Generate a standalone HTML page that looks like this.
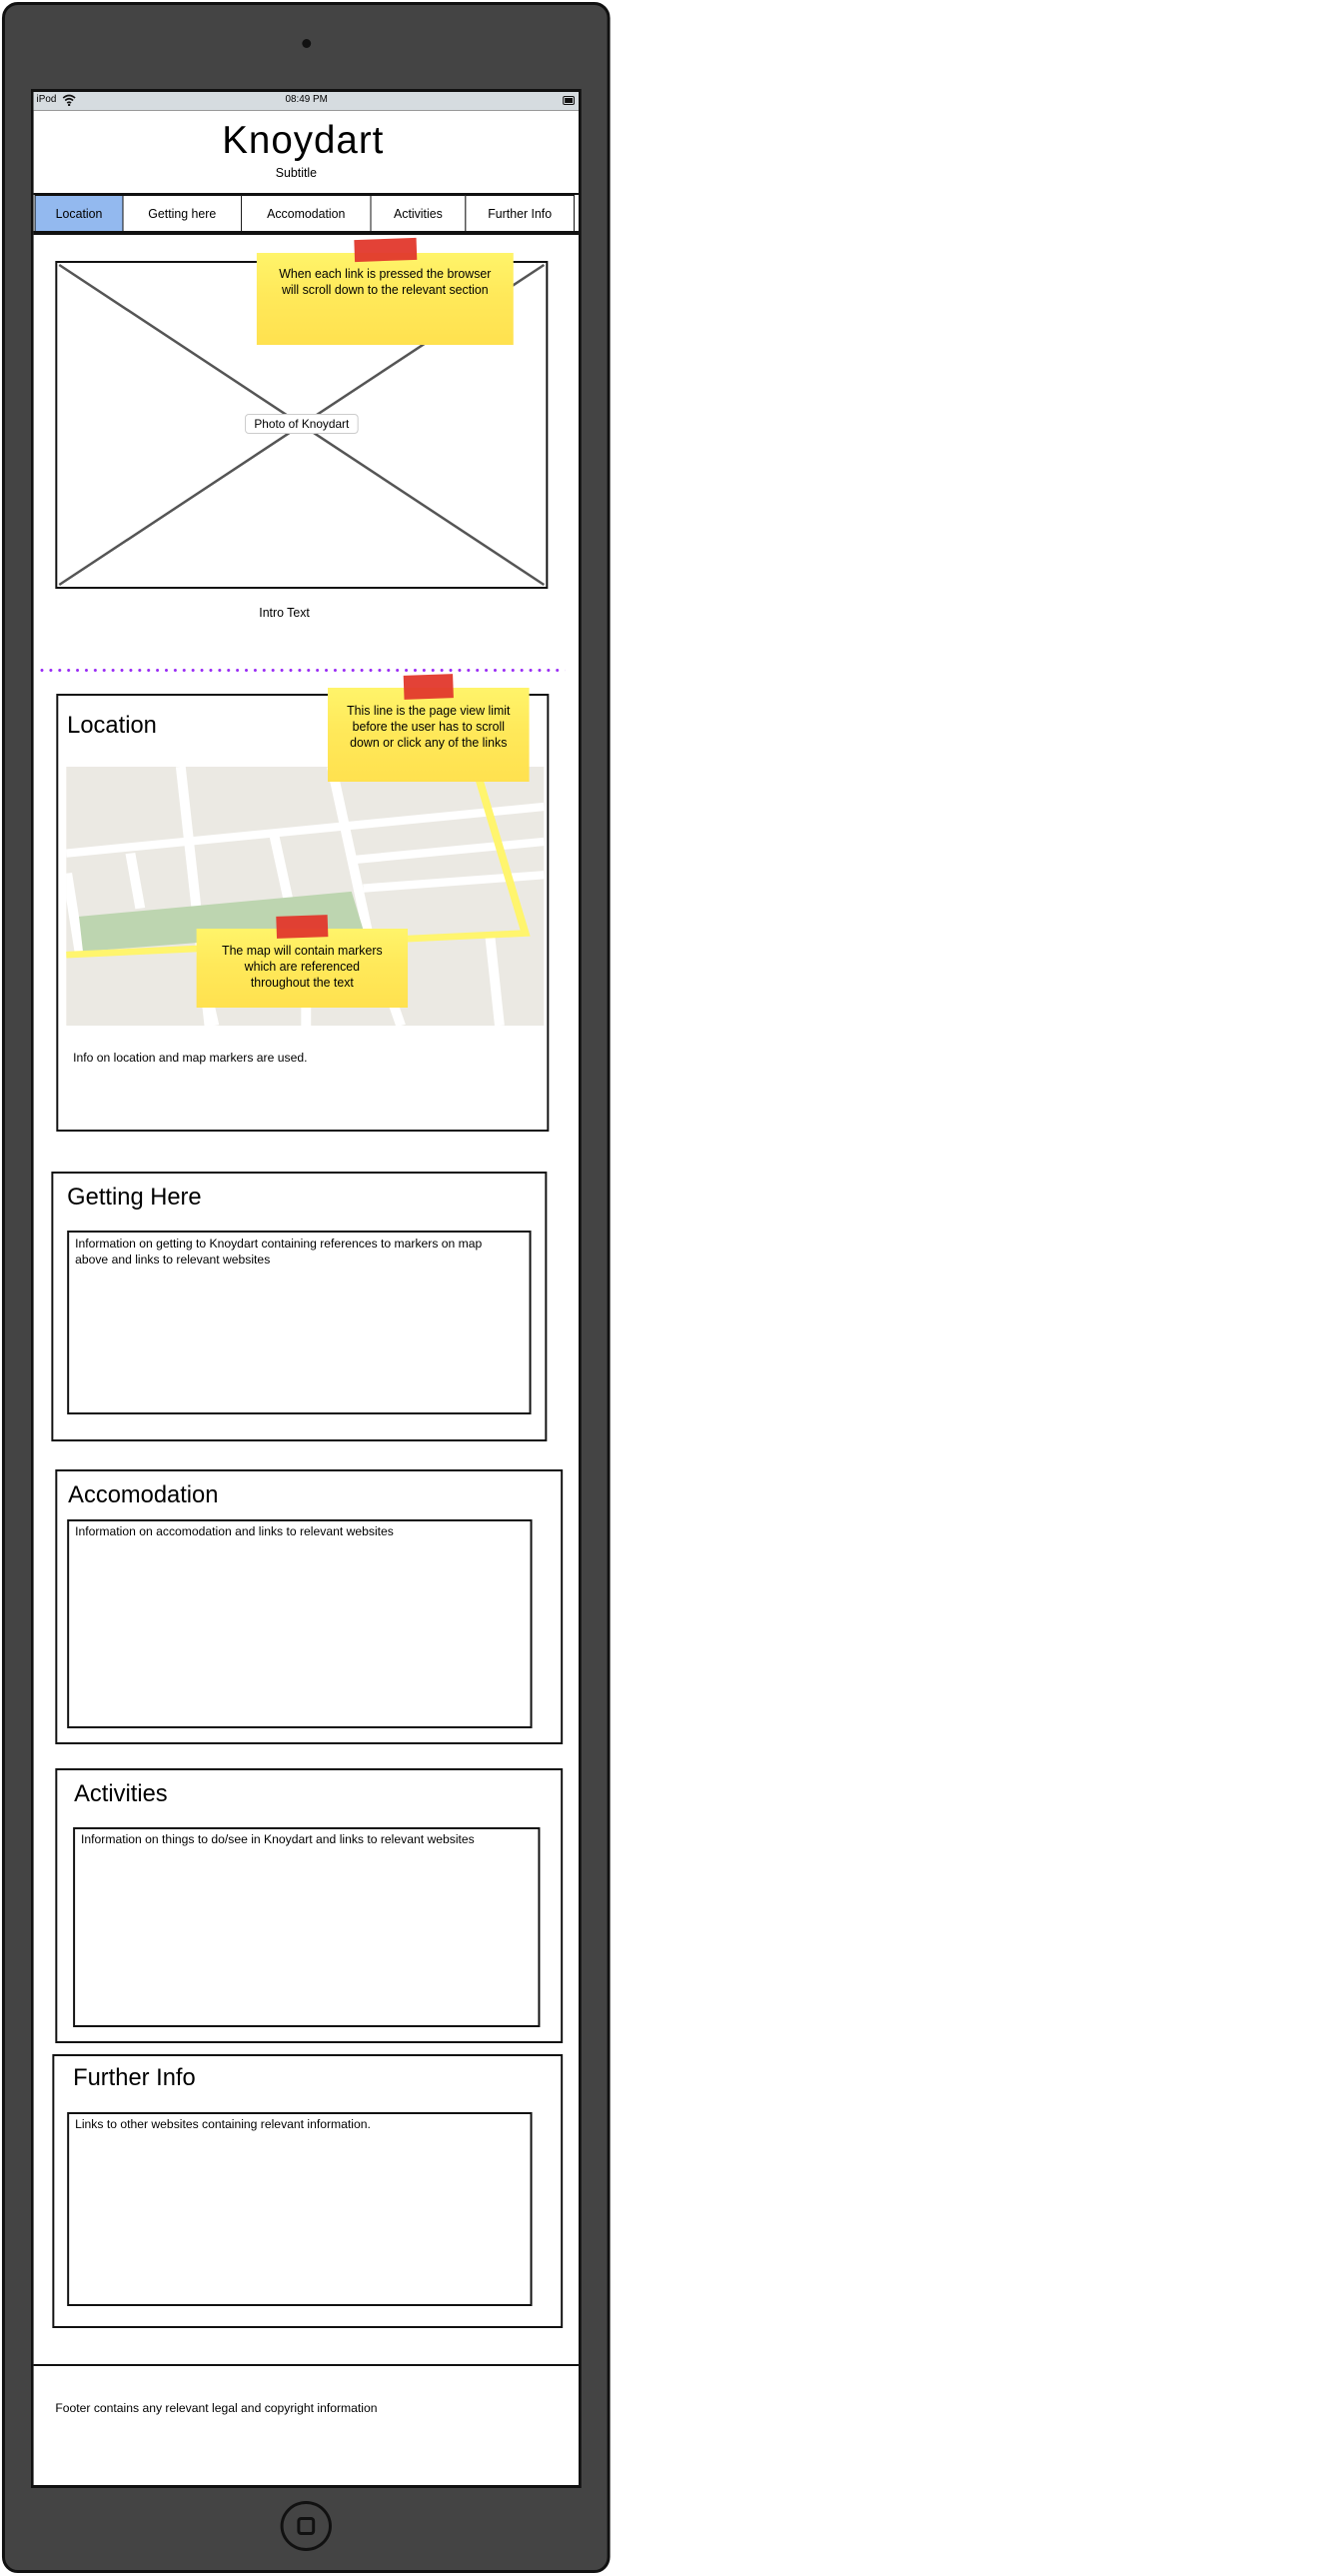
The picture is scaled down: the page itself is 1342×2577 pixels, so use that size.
<!DOCTYPE html>
<html><head><meta charset="utf-8"><style>
*{margin:0;padding:0;box-sizing:border-box}
body{width:1342px;height:2577px;background:#fff;position:relative;overflow:hidden;font-family:"Liberation Sans",sans-serif;color:#000}
#w{position:absolute;left:0;top:0;width:640px;height:2577px;transform:scaleX(0.988);transform-origin:0 0}
.a{position:absolute}
.t{position:absolute;white-space:nowrap}
.box{position:absolute;border:2px solid #111;background:#fff}
.note{position:absolute;background:linear-gradient(180deg,#fff46a 0%,#ffe95a 45%,#ffe14f 100%);font-size:12.5px;text-align:center;line-height:16px}
.tape{position:absolute;background:#e2382c;opacity:.95;transform:rotate(-2deg)}
.nav{position:absolute;top:195px;height:37px;border:1.5px solid #111;font-size:12.5px;display:flex;align-items:center;justify-content:center;background:#fff}
h2{position:absolute;font-weight:normal;font-size:24px;line-height:28px;white-space:nowrap}
.p{position:absolute;font-size:12.3px;line-height:16px}
</style></head><body><div id="w">
<div class="a" style="left:2px;top:2px;width:616px;height:2572px;background:#444;border:3px solid #111;border-radius:16px"></div>
<div class="a" style="left:306px;top:39px;width:9px;height:9px;border-radius:50%;background:#111"></div>
<div class="a" style="left:31px;top:89px;width:558px;height:2400px;background:#fff;border:3px solid #111"></div>
<!-- status bar -->
<div class="a" style="left:34px;top:92px;width:552px;height:19px;background:#d6dce0;border-bottom:1px solid #999"></div>
<div class="t" style="left:37px;top:94px;font-size:10px">iPod</div>
<svg class="a" style="left:63px;top:94px" width="14" height="12" viewBox="0 0 14 12"><path d="M1 4 Q7 -1 13 4 M3 6.5 Q7 3 11 6.5 M5 9 Q7 7.5 9 9" stroke="#111" stroke-width="1.6" fill="none"/><circle cx="7" cy="11" r="1.2" fill="#111"/></svg>
<div class="t" style="left:289px;top:94px;font-size:10px">08:49 PM</div>
<div class="a" style="left:570px;top:96px;width:12px;height:9px;border:1.5px solid #111;border-radius:2px;padding:1px"><div style="width:100%;height:100%;background:#111"></div></div>
<!-- header -->
<div class="t" style="left:0;width:614px;text-align:center;top:121px;font-size:39px;line-height:40px;letter-spacing:1px">Knoydart</div>
<div class="t" style="left:0;width:600px;text-align:center;top:166px;font-size:12.5px">Subtitle</div>
<div class="a" style="left:34px;top:193px;width:552px;height:2px;background:#111"></div>
<div class="nav" style="left:35px;width:90px;background:#93b9ef">Location</div>
<div class="nav" style="left:124px;width:121px">Getting here</div>
<div class="nav" style="left:244px;width:132px">Accomodation</div>
<div class="nav" style="left:375px;width:97px">Activities</div>
<div class="nav" style="left:471px;width:111px">Further Info</div>
<div class="a" style="left:34px;top:231px;width:552px;height:4px;background:#111"></div>
<!-- photo -->
<div class="box" style="left:56px;top:261px;width:499px;height:328px"></div>
<svg class="a" style="left:58px;top:263px" width="495" height="324"><line x1="2" y1="2" x2="493" y2="322" stroke="#555" stroke-width="2.5"/><line x1="493" y1="2" x2="2" y2="322" stroke="#555" stroke-width="2.5"/></svg>
<div class="t" style="left:248px;top:414px;width:115px;height:20px;background:#fff;border:1px solid #ccc;border-radius:4px;font-size:12px;text-align:center;line-height:18px">Photo of Knoydart</div>
<div class="note" style="left:260px;top:253px;width:260px;height:92px;padding-top:13px">When each link is pressed the browser<br>will scroll down to the relevant section</div>
<div class="tape" style="left:359px;top:239px;width:63px;height:22px"></div>
<div class="t" style="left:0;width:576px;text-align:center;top:606px;font-size:12.5px">Intro Text</div>
<!-- dotted line -->
<div class="a" style="left:38px;top:669px;width:534px;height:3px;background-image:radial-gradient(circle,#9a2cf5 1.4px,transparent 1.6px);background-size:9px 3px"></div>
<!-- location -->
<div class="box" style="left:57px;top:694px;width:499px;height:438px"></div>
<h2 style="left:68px;top:712px">Location</h2>
<svg class="a" style="left:67px;top:767px" width="484" height="259" viewBox="0 0 484 311" preserveAspectRatio="none">
<rect width="484" height="311" fill="#ebe9e3"/>
<g stroke="#fff" stroke-width="10" fill="none">
<path d="M116 0 L145 311"/><path d="M269 0 L305 196 L339 311"/>
<path d="M0 104 L484 48"/><path d="M289 112 L484 90"/><path d="M301 146 L484 130"/>
<path d="M65 104 L75 170"/><path d="M211 84 L225 160"/><path d="M1 128 L14 226"/>
<path d="M243 285 L243 311"/><path d="M429 200 L439 311"/><path d="M145 285 L150 311"/>
</g>
<polygon points="13,180 289,150 301,196 17,222" fill="#bdd5b0"/>
<path d="M0 226 L465 200 L417 10" stroke="#fff56e" stroke-width="8" fill="none"/>
</svg>
<div class="note" style="left:332px;top:688px;width:204px;height:94px;padding-top:15px">This line is the page view limit<br>before the user has to scroll<br>down or click any of the links</div>
<div class="tape" style="left:409px;top:675px;width:50px;height:24px"></div>
<div class="note" style="left:199px;top:929px;width:214px;height:79px;padding-top:14px">The map will contain markers<br>which are referenced<br>throughout the text</div>
<div class="tape" style="left:280px;top:916px;width:52px;height:22px"></div>
<div class="p" style="left:74px;top:1050px">Info on location and map markers are used.</div>
<!-- getting here -->
<div class="box" style="left:52px;top:1172px;width:502px;height:270px"></div>
<h2 style="left:68px;top:1184px">Getting Here</h2>
<div class="box" style="left:68px;top:1231px;width:470px;height:184px"></div>
<div class="p" style="left:76px;top:1236px;width:445px">Information on getting to Knoydart containing references to markers on map above and links to relevant websites</div>
<!-- accomodation -->
<div class="box" style="left:56px;top:1470px;width:514px;height:275px"></div>
<h2 style="left:69px;top:1482px">Accomodation</h2>
<div class="box" style="left:68px;top:1520px;width:471px;height:209px"></div>
<div class="p" style="left:76px;top:1524px">Information on accomodation and links to relevant websites</div>
<!-- activities -->
<div class="box" style="left:56px;top:1769px;width:514px;height:275px"></div>
<h2 style="left:75px;top:1781px">Activities</h2>
<div class="box" style="left:74px;top:1828px;width:473px;height:200px"></div>
<div class="p" style="left:82px;top:1832px">Information on things to do/see in Knoydart and links to relevant websites</div>
<!-- further info -->
<div class="box" style="left:53px;top:2055px;width:517px;height:274px"></div>
<h2 style="left:74px;top:2065px">Further Info</h2>
<div class="box" style="left:68px;top:2113px;width:471px;height:194px"></div>
<div class="p" style="left:76px;top:2117px">Links to other websites containing relevant information.</div>
<!-- footer -->
<div class="a" style="left:34px;top:2365px;width:552px;height:2px;background:#111"></div>
<div class="p" style="left:56px;top:2401px">Footer contains any relevant legal and copyright information</div>
<!-- home button -->
<div class="a" style="left:284px;top:2502px;width:52px;height:50px;border:3px solid #111;border-radius:50%"></div>
<div class="a" style="left:301px;top:2518px;width:18px;height:18px;border:3px solid #111;border-radius:4px"></div>
</div></body></html>
